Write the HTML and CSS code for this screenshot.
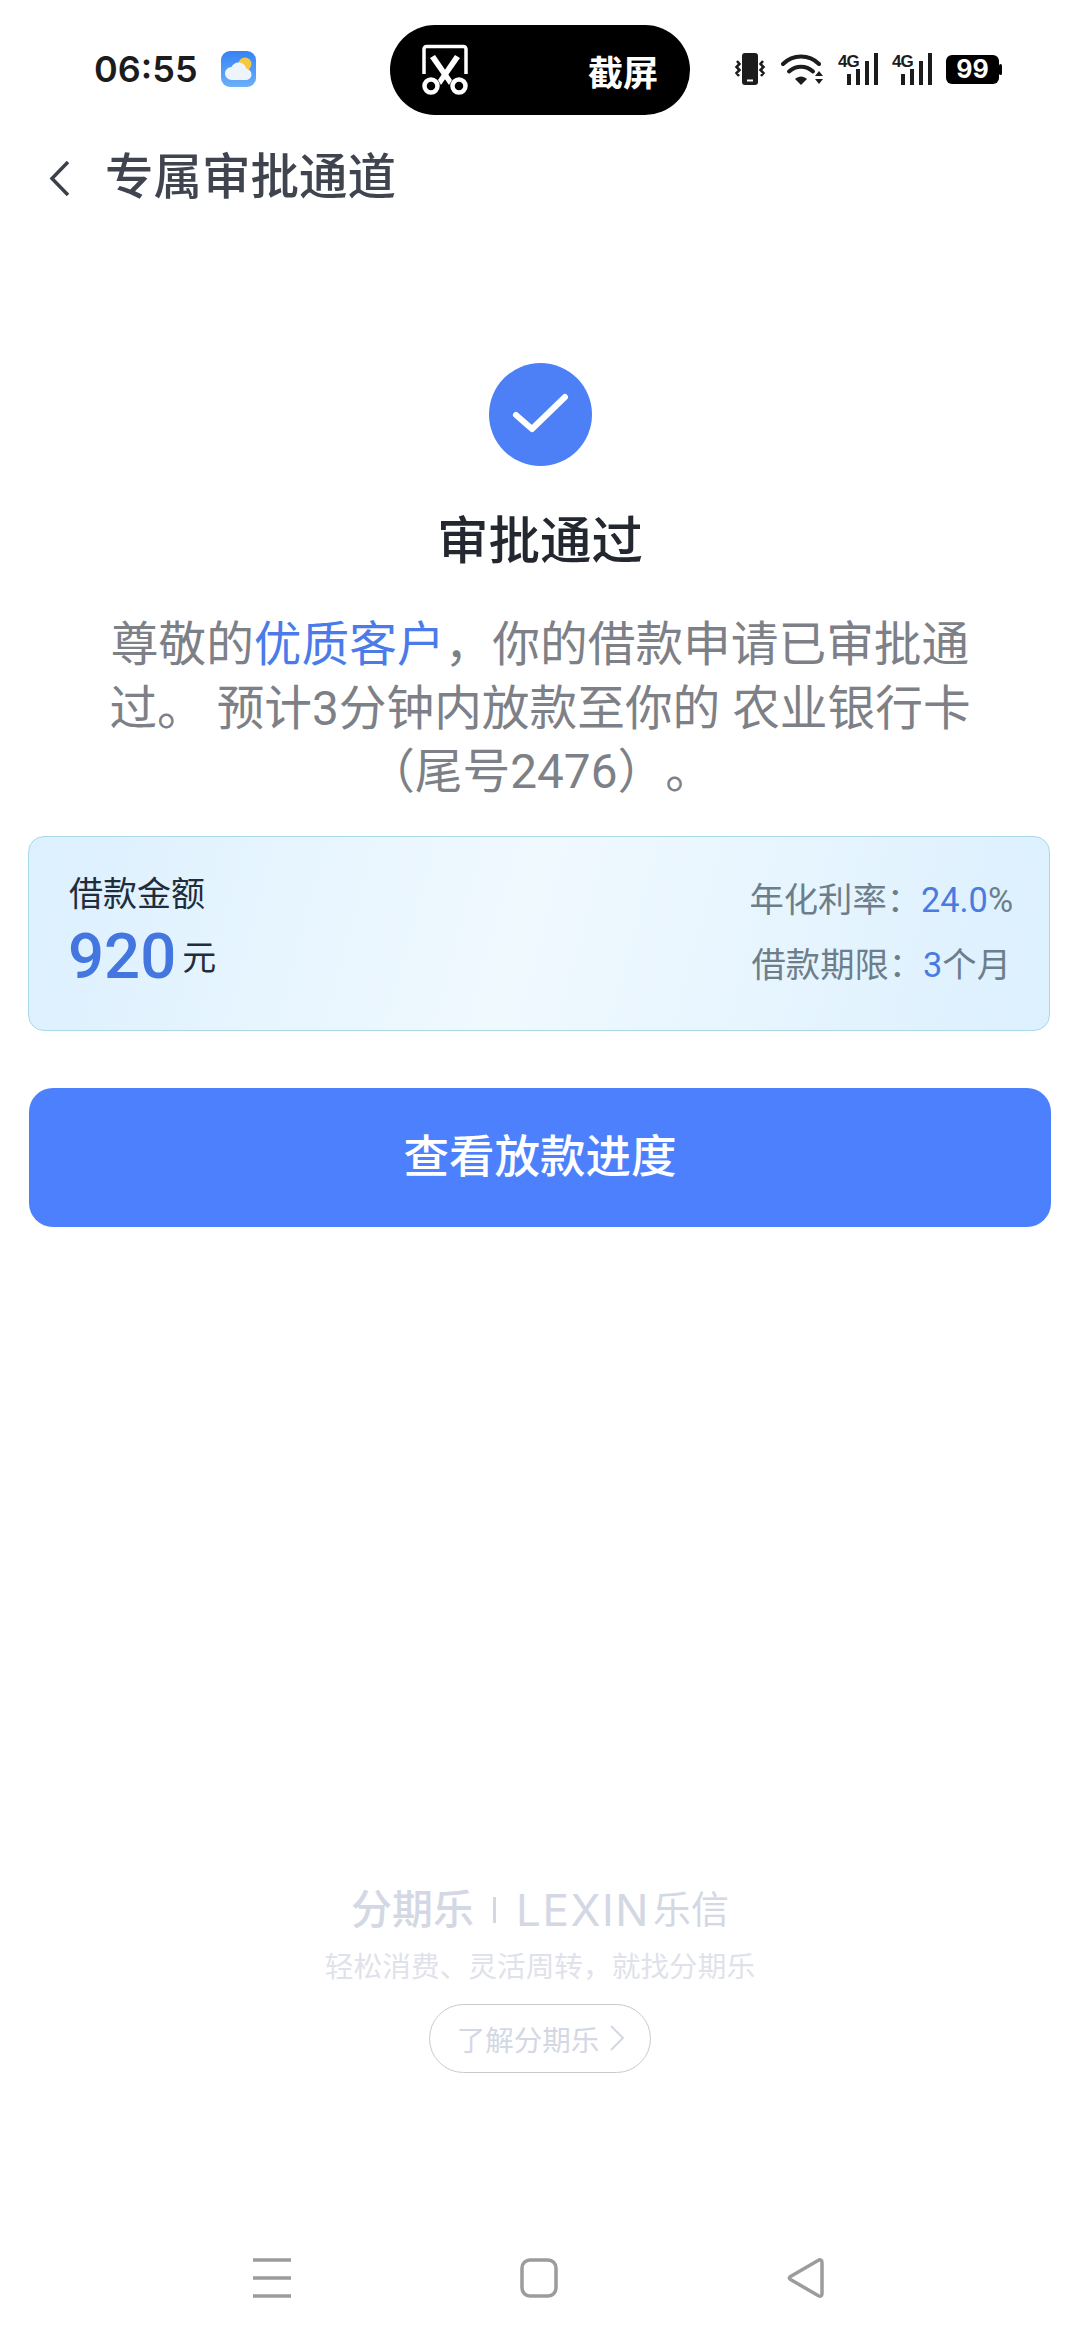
FILE: index.html
```html
<!DOCTYPE html>
<html lang="zh-CN">
<head>
<meta charset="utf-8">
<title>专属审批通道</title>
<link rel="stylesheet" href="styles.css">
</head>
<body>
<div class="page">
  <header class="status">
    <div class="status-left">
      <span class="time">06:55</span>
      <svg class="weather" viewBox="0 0 35 36">
        <defs><linearGradient id="wx" x1="0" y1="0" x2="0" y2="1"><stop offset="0" stop-color="#3583f4"/><stop offset="1" stop-color="#6cb0f8"/></linearGradient></defs>
        <rect width="35" height="36" rx="9" fill="url(#wx)"/>
        <circle cx="24" cy="13" r="6.500" fill="#f8c843"/>
        <path d="M11 29c-4 0-7-3-7-6.500 0-3.500 3-6.500 6.500-6.500 1.500-3 4-4.500 7-4.500 4 0 7 2.500 7.500 6 3 .5 5.500 3 5.500 6 0 3-2.500 5.500-5.500 5.500z" fill="#eef4fb"/>
      </svg>
    </div>
    <div class="capture">
      <svg class="scissors" viewBox="0 0 46 52">
        <path d="M2 30V5a2.500 2.500 0 0 1 2.500-2.500h37A2.500 2.500 0 0 1 44 5v25" fill="none" stroke="#fff" stroke-width="3.500"/>
        <path d="M8 14l5-3 17 25-3 5z" fill="#fff"/>
        <path d="M38 14l-5-3-17 25 3 5z" fill="#fff"/>
        <circle cx="9" cy="42" r="6.500" fill="#000" stroke="#fff" stroke-width="4.500"/>
        <circle cx="37" cy="42" r="6.500" fill="#000" stroke="#fff" stroke-width="4.500"/>
      </svg>
      <span class="capture-text">截屏</span>
    </div>
    <div class="status-right">
      <svg class="ic-vib" viewBox="0 0 32 34">
        <rect x="8" y="1" width="16" height="32" rx="3" fill="#1c1c1c"/>
        <rect x="13" y="27.500" width="6" height="2" fill="#fff"/>
        <path d="M3 9l2.500 3-3 3 3 3-3 3 2.500 3M29 9l-2.500 3 3 3-3 3 3 3-2.500 3" fill="none" stroke="#1c1c1c" stroke-width="2.500"/>
      </svg>
      <svg class="ic-wifi" viewBox="0 0 44 34">
        <path d="M2 12C12 2 28 2 38 12" fill="none" stroke="#1c1c1c" stroke-width="4" stroke-linecap="round"/>
        <path d="M8 19.500c7-6.500 17-6.500 24 0" fill="none" stroke="#1c1c1c" stroke-width="4" stroke-linecap="round"/>
        <path d="M14 27c3.500-3.500 8.500-3.500 12 0l-6 6z" fill="#1c1c1c"/>
        <path d="M34 24l4-5 4 5zM34 27h8l-4 5z" fill="#1c1c1c"/>
      </svg>
      <svg class="ic-sig" viewBox="0 0 41 34">
        <text x="0" y="15" class="sig-text">4G</text>
        <rect x="9" y="22" width="4" height="11" fill="#1c1c1c"/>
        <rect x="18" y="17" width="4" height="16" fill="#1c1c1c"/>
        <rect x="27" y="9" width="4" height="24" fill="#1c1c1c"/>
        <rect x="36" y="1" width="4" height="32" fill="#1c1c1c"/>
      </svg>
      <svg class="ic-sig" viewBox="0 0 41 34">
        <text x="0" y="15" class="sig-text">4G</text>
        <rect x="9" y="22" width="4" height="11" fill="#1c1c1c"/>
        <rect x="18" y="17" width="4" height="16" fill="#1c1c1c"/>
        <rect x="27" y="9" width="4" height="24" fill="#1c1c1c"/>
        <rect x="36" y="1" width="4" height="32" fill="#1c1c1c"/>
      </svg>
      <svg class="ic-bat" viewBox="0 0 56 34">
        <rect x="0" y="3" width="53" height="29" rx="6" fill="#000"/>
        <rect x="53" y="12" width="3" height="11" rx="1.500" fill="#000"/>
        <text x="26.500" y="26" class="bat-text">99</text>
      </svg>
    </div>
  </header>

  <nav class="titlebar">
    <svg class="back" viewBox="0 0 21 37"><path d="M19 2L3 18.500 19 35" fill="none" stroke="#3b404a" stroke-width="3.500"/></svg>
    <h1 class="title">专属审批通道</h1>
  </nav>

  <main class="result">
    <svg class="check" viewBox="0 0 103 103">
      <circle cx="51.500" cy="51.500" r="51.500" fill="#4d80f6"/>
      <path d="M27 52l16 14 33-32" fill="none" stroke="#fff" stroke-width="6" stroke-linecap="round" stroke-linejoin="round"/>
    </svg>
    <h2 class="heading">审批通过</h2>
    <p class="desc">尊敬的<span class="hl">优质客户</span>，你的借款申请已审批通过。 预计3分钟内放款至你的 农业银行卡（尾号2476）。</p>
  </main>

  <section class="card">
    <div class="card-left">
      <div class="label">借款金额</div>
      <div class="amount"><span class="num">920</span><span class="unit">元</span></div>
    </div>
    <div class="card-right">
      <div class="line">年化利率：<span class="blue">24.0</span>%</div>
      <div class="line">借款期限：<span class="blue">3</span>个月</div>
    </div>
  </section>

  <button class="cta">查看放款进度</button>

  <footer class="brand">
    <div class="logo"><span class="logo-cn">分期乐</span><span class="logo-bar"></span><span class="logo-en">LEXIN</span><span class="logo-cn2">乐信</span></div>
    <div class="slogan">轻松消费、灵活周转，就找分期乐</div>
    <div class="more"><span>了解分期乐</span><svg class="more-arrow" viewBox="0 0 16 28"><path d="M2 2l12 12L2 26" fill="none" stroke="#d3d8e4" stroke-width="2"/></svg></div>
  </footer>

  <div class="navbar">
    <svg class="nav-ic" viewBox="0 0 38 42"><path d="M0 3h38M0 21h38M0 39h38" stroke="#9c9c9c" stroke-width="3.500"/></svg>
    <svg class="nav-ic" viewBox="0 0 38 42"><rect x="2" y="3" width="34" height="36" rx="8" fill="none" stroke="#9c9c9c" stroke-width="3.500"/></svg>
    <svg class="nav-ic" viewBox="0 0 38 42"><path d="M3.500 19.500L31 3.500q4-2 4 2v31q0 4-4 2L3.500 22.500q-2.500-1.500 0-3z" fill="none" stroke="#9c9c9c" stroke-width="3.500"/></svg>
  </div>
</div>
</body>
</html>
```
FILE: styles.css
```css
* { box-sizing: border-box; }
html, body { margin: 0; padding: 0; background: #fff; }
body { font-family: Roboto, "Noto Sans CJK SC", sans-serif; text-spacing-trim: space-all; }
.page { width: 1080px; height: 2344px; overflow: hidden; display: flex; flex-direction: column; background: #fff; }

/* status bar */
.status { display: grid; grid-template-columns: 390px 300px 1fr; height: 90px; margin-top: 25px; flex: none; }
.status-left { display: flex; align-items: center; padding: 0 0 2px 94px; }
.time { font-family: Inter, sans-serif; font-weight: 600; font-size: 36px; color: #1c1c1c; width: 103px; line-height: 44px; }
.weather { width: 35px; height: 36px; margin-left: 24px; }
.capture { background: #000; border-radius: 45px; display: flex; align-items: center; justify-content: space-between; padding: 0 32px; }
.scissors { width: 46px; height: 52px; }
.capture-text { color: #fff; font-size: 35px; font-weight: 700; font-family: "Noto Sans CJK SC", sans-serif; }
.status-right { display: flex; align-items: center; padding: 0 0 2px 44px; gap: 13px; }
.status-right svg { height: 34px; flex: none; }
.ic-vib { width: 32px; }
.ic-wifi { width: 44px; margin-left: 2px; }
.ic-sig { width: 41px; }
.ic-bat { width: 56px; }
.sig-text { font-family: "Liberation Sans", sans-serif; font-weight: 700; font-size: 17px; letter-spacing: -1px; fill: #1c1c1c; }
.bat-text { font-family: Inter, sans-serif; font-weight: 700; font-size: 25px; fill: #fff; text-anchor: middle; }

/* title */
.titlebar { display: flex; align-items: center; height: 126px; padding-left: 49px; gap: 35px; flex: none; }
.back { width: 21px; height: 37px; }
.title { margin: 0; font-size: 48.500px; font-weight: 500; color: #3f444e; line-height: 64px; }

/* result */
.result { display: flex; flex-direction: column; align-items: center; margin-top: 122px; flex: none; }
.check { width: 103px; height: 103px; display: block; margin-left: 1px; }
.heading { margin: 41px 0 0; font-size: 51.500px; font-weight: 500; line-height: 70px; color: #23272f; }
.desc { margin: 37px 0 0; width: 880px; font-size: 47.700px; line-height: 63.500px; color: #7d8187; text-align: center; font-weight: 400; }
.hl { color: #4a7be8; }

/* card */
.card { margin: 31px 30px 0 28px; height: 195px; flex: none; border: 1px solid #a9d8e6; border-radius: 16px; background: linear-gradient(105deg, #dcf0fe 0%, #f0f9fe 48%, #dcf0fe 100%); display: flex; justify-content: space-between; align-items: stretch; padding: 0 36px 0 40px; }
.card-left { padding-top: 35px; }
.label { font-size: 34px; line-height: 44px; color: #1f2d3d; }
.amount { display: flex; align-items: center; margin-top: 1px; }
.num { font-size: 63.500px; font-weight: 500; line-height: 80px; color: #4476e0; margin-left: -1px; }
.unit { font-size: 34px; line-height: 40px; color: #1f2d3d; margin: 3px 0 0 6px; }
.card-right { display: flex; flex-direction: column; justify-content: center; text-align: center; }
.line { font-size: 34.300px; line-height: 65px; color: #6d7e8b; }
.blue { color: #4a7be0; }

/* cta */
.cta { margin: 57px 29px 0 29px; height: 139px; flex: none; border: 0; border-radius: 24px; background: #4d80fd; color: #fff; font-family: Roboto, "Noto Sans CJK SC", sans-serif; font-size: 45.500px; font-weight: 500; padding: 0 0 8px; }

/* brand */
.brand { display: flex; flex-direction: column; align-items: center; margin-top: 658px; flex: none; }
.logo { display: flex; align-items: center; height: 50px; color: #d3d8e4; }
.logo-cn { font-size: 41px; font-weight: 500; line-height: 50px; }
.logo-bar { width: 3px; height: 26px; background: #d3d8e4; margin: 0 20px 0 19px; }
.logo-en { font-family: Inter, sans-serif; font-size: 44px; font-weight: 400; letter-spacing: 1.500px; line-height: 50px; }
.logo-cn2 { font-size: 38px; font-weight: 400; line-height: 50px; margin-left: 3px; }
.slogan { font-size: 28.700px; line-height: 40px; color: #dfe2ea; margin-top: 12px; }
.more { width: 222px; height: 69px; margin-top: 17px; border: 1px solid #c9cacd; border-radius: 35px; display: flex; align-items: center; justify-content: center; gap: 10px; font-size: 28.500px; color: #d3d8e4; padding-left: 2px; }
.more-arrow { width: 16px; height: 28px; }

/* nav */
.navbar { display: flex; justify-content: space-between; padding: 0 255px 0 253px; margin-top: 184px; flex: none; }
.nav-ic { width: 38px; height: 42px; }
```
